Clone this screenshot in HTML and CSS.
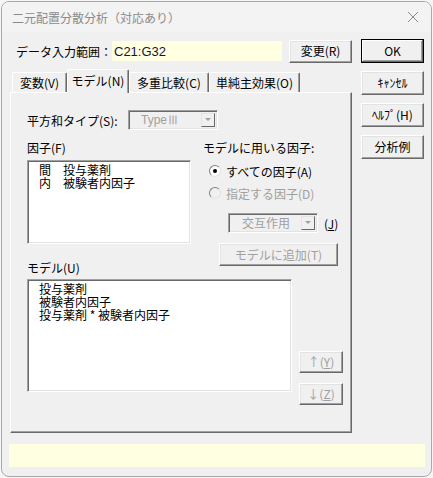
FILE: index.html
```html
<!DOCTYPE html>
<html lang="ja">
<head>
    <meta charset="UTF-8">
    <title>二元配置分散分析（対応あり）</title>
    <link rel="stylesheet" href="styles.css">
</head>
<body>

    <div class="window">
        <div class="titlebar">
            <span class="title">二元配置分散分析（対応あり）</span>
            <svg class="close" width="12" height="12" viewBox="0 0 12 12">
                <path d="M1 1 L11 11 M11 1 L1 11" stroke="#8c8c8c" stroke-width="1" fill="none"/>
            </svg>
        </div>

        <div class="content">
            <div class="main">
                <div class="range-row">
                    <span class="range-label">データ入力範囲：</span>
                    <div class="range-input">C21:G32</div>
                    <button class="btn btn-change">変更(R)</button>
                </div>

                <div class="tabs">
                    <div class="tab tab-vars">変数(V)</div>
                    <div class="tab tab-model active">モデル(N)</div>
                    <div class="tab tab-multi">多重比較(C)</div>
                    <div class="tab tab-simple">単純主効果(O)</div>
                </div>

                <div class="panel">
                    <div class="type-row">
                        <span class="type-label">平方和タイプ(S):</span>
                        <div class="combo combo-type disabled">
                            <span class="combo-text">TypeⅢ</span>
                            <span class="combo-arrow"></span>
                        </div>
                    </div>

                    <div class="factor-row">
                        <div class="factor-col">
                            <div class="label">因子(F)</div>
                            <div class="listbox factor-list">
                                <div>間　投与薬剤</div>
                                <div>内　被験者内因子</div>
                            </div>
                        </div>
                        <div class="use-col">
                            <div class="label">モデルに用いる因子:</div>
                            <div class="radio-row first">
                                <span class="radio checked"></span>
                                <span>すべての因子(A)</span>
                            </div>
                            <div class="radio-row disabled">
                                <span class="radio"></span>
                                <span>指定する因子(D)</span>
                            </div>
                            <div class="inter-row">
                                <div class="combo combo-inter disabled">
                                    <span class="combo-text">交互作用</span>
                                    <span class="combo-arrow"></span>
                                </div>
                                <span class="inter-key">(<u>J</u>)</span>
                            </div>
                            <button class="btn btn-add" disabled>モデルに追加(T)</button>
                        </div>
                    </div>

                    <div class="label model-label">モデル(U)</div>
                    <div class="model-row">
                        <div class="listbox model-list">
                            <div>投与薬剤</div>
                            <div>被験者内因子</div>
                            <div>投与薬剤 * 被験者内因子</div>
                        </div>
                        <div class="move-col">
                            <button class="btn btn-move" disabled>↑(<u>Y</u>)</button>
                            <button class="btn btn-move" disabled>↓(<u>Z</u>)</button>
                        </div>
                    </div>
                </div>
            </div>

            <div class="side">
                <button class="btn btn-side default">OK</button>
                <button class="btn btn-side">ｷｬﾝｾﾙ</button>
                <button class="btn btn-side">ﾍﾙﾌﾟ(H)</button>
                <button class="btn btn-side">分析例</button>
            </div>
        </div>

        <div class="status"></div>
    </div>

</body>
</html>
```

FILE: styles.css
```css
body {
    margin: 0;
    background: #f6f6f6;
    font-family: "Noto Sans CJK JP", "Liberation Sans", sans-serif;
    font-size: 12px;
    color: #000;
}

.window {
    margin: 1px 0 0 1px;
    width: 429px;
    height: 474px;
    border: 1px solid #a9a9a9;
    border-radius: 8px;
    background: #f0f0f0;
    overflow: hidden;
}

.titlebar {
    height: 30px;
    display: flex;
    align-items: center;
    justify-content: space-between;
    padding: 0 12px 0 10px;
    background: #f3f3f3;
}

.title {
    color: #8a8a8a;
    font-size: 12px;
}

.close {
    display: block;
}

.content {
    display: flex;
    padding: 7px 0 0 8px;
}

.main {
    width: 342px;
}

.side {
    margin-left: 9px;
    width: 63px;
    display: flex;
    flex-direction: column;
    gap: 8px;
}

/* buttons */
.btn {
    font-family: inherit;
    font-size: 12px;
    color: #000;
    background: #f0f0f0;
    border: 1px solid;
    border-color: #fff #696969 #696969 #fff;
    box-shadow: inset -1px -1px #a0a0a0, inset 1px 1px #e3e3e3;
    padding: 0;
    line-height: 14px;
}

.btn:disabled {
    color: #a0a0a0;
}

.btn-side {
    height: 24px;
    width: 63px;
}

.btn-side.default {
    border: 1px solid #000;
    box-shadow: inset -1px -1px #696969, inset 1px 1px #fff, inset -2px -2px #a0a0a0;
}

.btn-change {
    width: 63px;
    height: 23px;
    margin-left: 7px;
}

/* range row */
.range-row {
    display: flex;
    align-items: center;
    height: 24px;
}

.range-label {
    margin-left: 6px;
    width: 96px;
}

.range-input {
    width: 168px;
    height: 20px;
    padding-left: 2px;
    background: #ffffe1;
    color: #14143c;
    font-family: "Liberation Sans", sans-serif;
    font-size: 13px;
    line-height: 21px;
}

/* tabs */
.tabs {
    display: flex;
    align-items: flex-end;
    height: 23px;
    margin-top: 6px;
    padding-left: 2px;
}

.tab {
    height: 19px;
    line-height: 19px;
    text-align: center;
    border: 1px solid;
    border-bottom: none;
    border-color: #fff #696969 #fff #fff;
    box-shadow: inset -1px 0 #a0a0a0;
    border-radius: 2px 2px 0 0;
}

.tab-vars { width: 53px; }
.tab-model { width: 60px; }
.tab-multi { width: 78px; }
.tab-simple { width: 89px; }

.tab.active {
    height: 23px;
    line-height: 21px;
    position: relative;
    margin-bottom: -1px;
    background: #f0f0f0;
    z-index: 1;
}

/* panel */
.panel {
    height: 339px;
    border: 1px solid;
    border-color: #fff #696969 #696969 #fff;
    box-shadow: inset -1px -1px #a0a0a0;
    padding-left: 16px;
}

.label {
    line-height: 14px;
}

.type-row {
    display: flex;
    align-items: center;
    margin-top: 17px;
}

.type-label {
    width: 101px;
}

.combo {
    display: flex;
    height: 20px;
    box-sizing: border-box;
    border: 1px solid;
    border-color: #a0a0a0 #fff #fff #a0a0a0;
    box-shadow: inset 1px 1px #696969, inset -1px -1px #e3e3e3;
    padding: 2px;
}

.combo.disabled {
    color: #a0a0a0;
}

.combo-text {
    flex: 1;
    line-height: 14px;
    padding-left: 2px;
}

.combo-type {
    width: 90px;
}

.combo-type .combo-text {
    font-family: "Liberation Sans", sans-serif;
    padding-left: 10px;
}

.combo-arrow {
    width: 14px;
    height: 14px;
    box-sizing: border-box;
    border: 1px solid;
    border-color: #e3e3e3 #696969 #696969 #e3e3e3;
    position: relative;
}

.combo-arrow::after {
    content: "";
    position: absolute;
    left: 3px;
    top: 4px;
    border-left: 3px solid transparent;
    border-right: 3px solid transparent;
    border-top: 3px solid #a0a0a0;
}

/* factor section */
.factor-row {
    display: flex;
    align-items: flex-start;
    margin-top: 11px;
}

.factor-col {
    width: 164px;
}

.listbox {
    background: #fff;
    box-sizing: border-box;
    border: 1px solid;
    border-color: #a0a0a0 #fff #fff #a0a0a0;
    box-shadow: inset 1px 1px #696969, inset -1px -1px #e3e3e3;
    padding: 2px 0 0 11px;
    line-height: 13px;
}

.factor-list {
    margin-top: 5px;
    height: 84px;
}

.use-col {
    margin-left: 12px;
    margin-bottom: -22px;
}

.radio-row {
    display: flex;
    align-items: center;
    height: 16px;
    margin-top: 6px;
    padding-left: 6px;
}

.radio-row.first {
    margin-top: 8px;
}

.radio-row.disabled {
    color: #a0a0a0;
}

.radio {
    width: 10px;
    height: 10px;
    border: 1px solid;
    border-color: #808080 #e3e3e3 #e3e3e3 #808080;
    border-radius: 50%;
    background: #fff;
    margin-right: 5px;
    position: relative;
}

.radio-row.disabled .radio {
    background: #f0f0f0;
}

.radio.checked::after {
    content: "";
    position: absolute;
    left: 3px;
    top: 3px;
    width: 4px;
    height: 4px;
    border-radius: 50%;
    background: #000;
}

.inter-row {
    display: flex;
    align-items: center;
    margin: 12px 0 0 25px;
}

.combo-inter {
    width: 90px;
}

.combo-inter .combo-text {
    padding-left: 11px;
}

.inter-key {
    margin-left: 6px;
}

.btn-add {
    display: block;
    width: 119px;
    height: 23px;
    margin: 10px 0 0 16px;
}

/* model section */
.model-label {
    margin-top: 17px;
}

.model-row {
    display: flex;
    margin-top: 4px;
}

.model-list {
    width: 265px;
    height: 113px;
}

.move-col {
    display: flex;
    flex-direction: column;
    gap: 10px;
    margin-left: 7px;
    padding-top: 72px;
}

.btn-move {
    width: 44px;
    height: 22px;
}

/* status bar */
.status {
    margin: 11px 0 0 7px;
    width: 416px;
    height: 23px;
    background: #ffffe1;
}
```
